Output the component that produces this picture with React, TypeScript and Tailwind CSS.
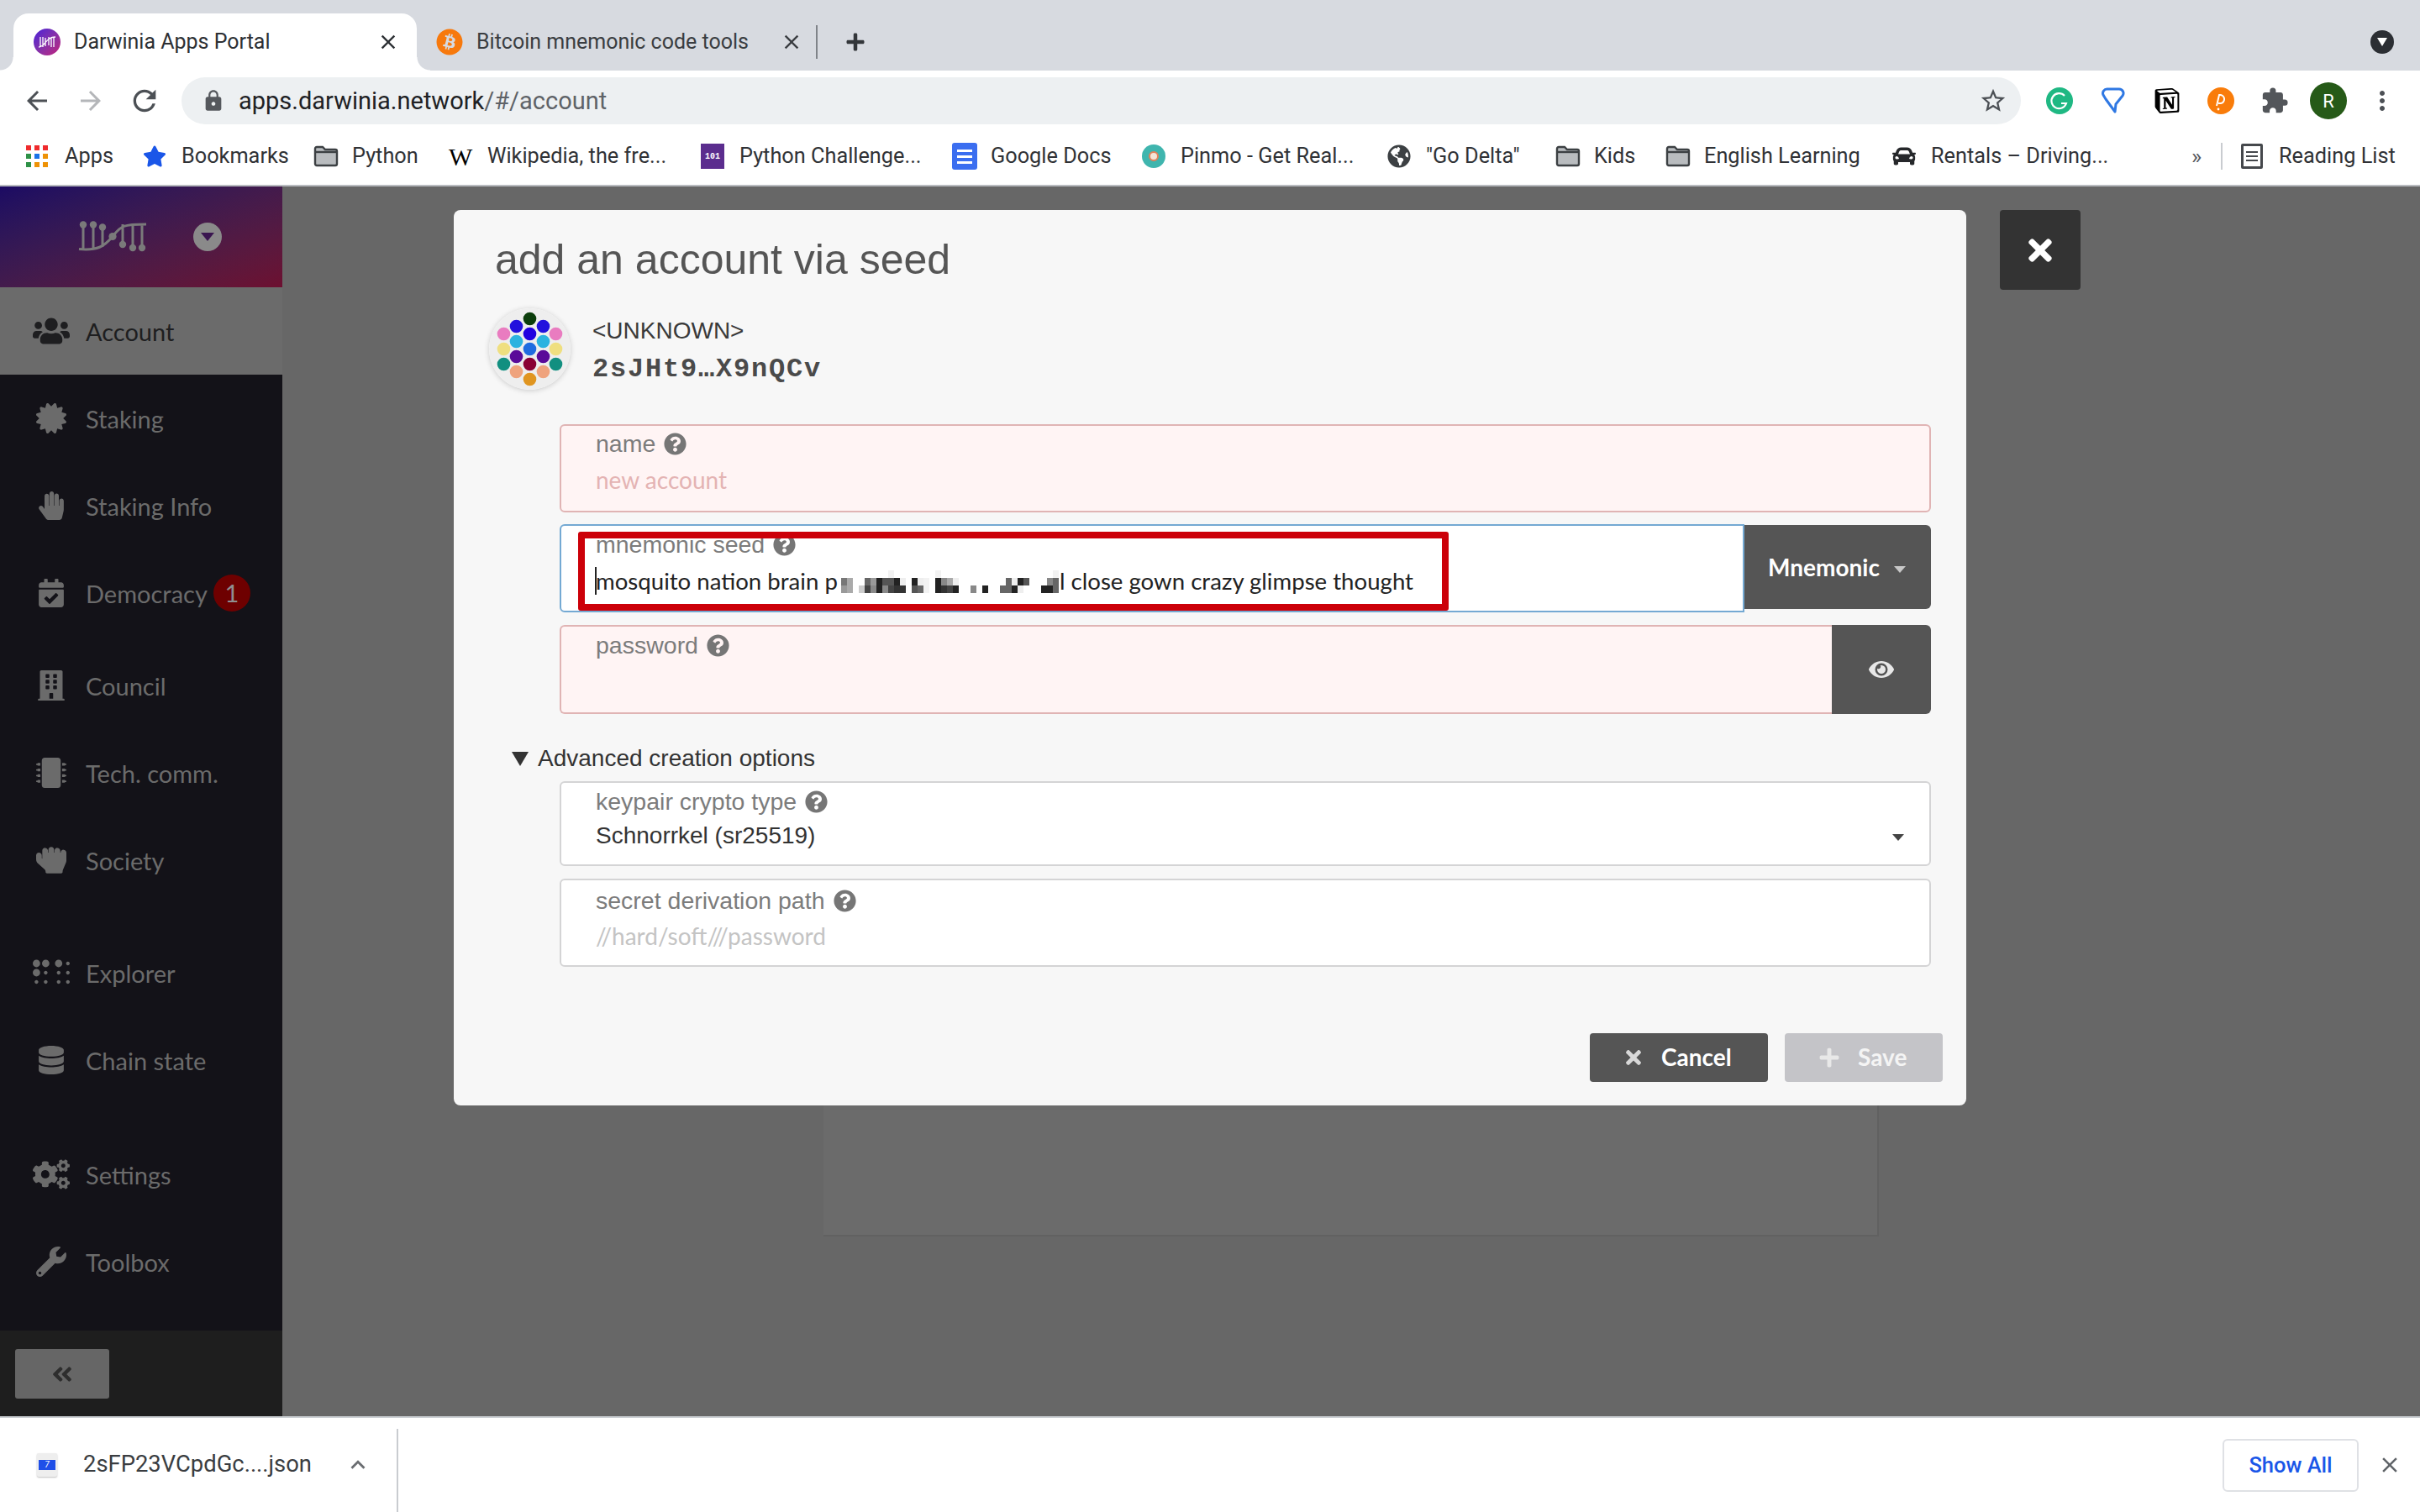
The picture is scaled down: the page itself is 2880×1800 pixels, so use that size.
import { ReactNode } from "react";
import {
  FaAngleDoubleLeft,
  FaBitcoin,
  FaBraille,
  FaBuilding,
  FaCalendarCheck,
  FaCar,
  FaCertificate,
  FaCogs,
  FaDatabase,
  FaEye,
  FaGlobeAmericas,
  FaHandPaper,
  FaHandRock,
  FaMicrochip,
  FaPlus,
  FaQuestionCircle,
  FaStar,
  FaTimes,
  FaUsers,
  FaWrench,
} from "react-icons/fa";
import {
  MdArrowBack,
  MdArrowForward,
  MdClose,
  MdExtension,
  MdKeyboardArrowUp,
  MdLock,
  MdMoreVert,
  MdOutlineStarBorder,
  MdRefresh,
} from "react-icons/md";
import { SiNotion } from "react-icons/si";

function Folder() {
  return (
    <svg width="30" height="26" viewBox="0 0 30 26">
      <path d="M2 4a2 2 0 0 1 2-2h7l3 3h12a2 2 0 0 1 2 2v15a2 2 0 0 1-2 2H4a2 2 0 0 1-2-2z" fill="#b9bcbf" stroke="#3c4043" strokeWidth="2.4" />
      <path d="M2 8h26" stroke="#3c4043" strokeWidth="2.4" />
    </svg>
  );
}

function AppsGrid() {
  const colors = ["#ef2b2d", "#ef2b2d", "#ef2b2d", "#2e9147", "#1a73e8", "#ee9206", "#2e9147", "#ee9206", "#ee9206"];
  return (
    <div className="grid grid-cols-3 gap-x-[4px] gap-y-[4px] w-[26px]">
      {colors.map((c, i) => (
        <svg key={i} width="6" height="6"><rect width="6" height="6" fill={c} /></svg>
      ))}
    </div>
  );
}

const bookmarks: { label: string; icon: ReactNode; width: string }[] = [
  { label: "Apps", icon: <AppsGrid />, width: "w-[139px]" },
  { label: "Bookmarks", icon: <FaStar size={28} color="#1a56e8" />, width: "w-[203px]" },
  { label: "Python", icon: <Folder />, width: "w-[161px]" },
  { label: "Wikipedia, the fre...", icon: <span className="font-['Liberation_Serif'] text-[30px] text-black">W</span>, width: "w-[300px]" },
  {
    label: "Python Challenge...",
    icon: (
      <div className="w-[28px] h-[30px] bg-[#5b2d8e] text-white text-[10px] font-bold flex items-center justify-center font-['Liberation_Mono',monospace]">101</div>
    ),
    width: "w-[299px]",
  },
  {
    label: "Google Docs",
    icon: (
      <div className="w-[30px] h-[32px] rounded-[3px] bg-[#3b6ef0] flex flex-col items-center justify-center gap-[4px]">
        <div className="w-[18px] h-[3px] bg-white" />
        <div className="w-[18px] h-[3px] bg-white" />
        <div className="w-[18px] h-[3px] bg-white" />
      </div>
    ),
    width: "w-[226px]",
  },
  {
    label: "Pinmo - Get Real...",
    icon: (
      <div className="w-[28px] h-[28px] rounded-full bg-[#3fb5ae] flex items-center justify-center">
        <div className="w-[12px] h-[12px] rounded-full bg-[#f3e6d8] border-2 border-[#e2825a]" />
      </div>
    ),
    width: "w-[292px]",
  },
  { label: '"Go Delta"', icon: <FaGlobeAmericas size={28} color="#3c4043" />, width: "w-[200px]" },
  { label: "Kids", icon: <Folder />, width: "w-[131px]" },
  { label: "English Learning", icon: <Folder />, width: "w-[270px]" },
  { label: "Rentals – Driving...", icon: <FaCar size={28} color="#26282b" />, width: "w-[356px]" },
];

const navGroups: { label: string; icon: ReactNode; active?: boolean; badge?: boolean }[][] = [
  [
    { label: "Account", icon: <FaUsers size={44} />, active: true },
    { label: "Staking", icon: <FaCertificate size={36} /> },
    { label: "Staking Info", icon: <FaHandPaper size={34} /> },
    { label: "Democracy", icon: <FaCalendarCheck size={34} />, badge: true },
    { label: "Council", icon: <FaBuilding size={36} /> },
    { label: "Tech. comm.", icon: <FaMicrochip size={36} /> },
    { label: "Society", icon: <FaHandRock size={36} /> },
  ],
  [
    { label: "Explorer", icon: <FaBraille size={44} /> },
    { label: "Chain state", icon: <FaDatabase size={34} /> },
  ],
  [
    { label: "Settings", icon: <FaCogs size={44} /> },
    { label: "Toolbox", icon: <FaWrench size={36} /> },
  ],
];

// pixelated part of the seed phrase: column, row, colour
const mosaic: [number, number, string][] = [
  [0, 1, "#777"], [0, 2, "#999"], [1, 1, "#aaa"], [1, 2, "#aaa"], [3, 2, "#ccc"],
  [4, 1, "#666"], [4, 2, "#444"], [5, 1, "#999"], [5, 2, "#888"], [6, 1, "#222"], [6, 2, "#222"],
  [7, 1, "#555"], [7, 2, "#888"], [8, 0, "#f2f2f2"], [8, 1, "#555"], [8, 2, "#444"],
  [9, 1, "#222"], [9, 2, "#333"], [10, 1, "#eee"], [10, 2, "#333"],
  [12, 1, "#222"], [12, 2, "#555"], [13, 1, "#eee"], [13, 2, "#666"], [14, 1, "#f2f2f2"], [14, 2, "#f2f2f2"],
  [16, 0, "#f2f2f2"], [16, 1, "#222"], [16, 2, "#222"], [17, 1, "#888"], [17, 2, "#333"],
  [18, 1, "#aaa"], [18, 2, "#444"], [19, 1, "#eee"], [19, 2, "#222"],
  [22, 2, "#888"], [24, 2, "#222"],
  [27, 2, "#666"], [28, 1, "#666"], [28, 2, "#666"], [29, 1, "#eee"], [29, 2, "#222"],
  [30, 1, "#222"], [30, 2, "#eee"], [31, 1, "#555"],
  [34, 2, "#222"], [35, 1, "#888"], [35, 2, "#222"], [36, 0, "#f2f2f2"], [36, 1, "#666"], [36, 2, "#666"],
];

const dots: [number, number, string][] = [
  [0, -36, "#0b3d0b"], [-16, -27, "#2211dd"], [16, -27, "#2211dd"], [-31, -18, "#e97cc0"], [0, -18, "#2200e0"], [31, -18, "#e97cc0"],
  [-16, -9, "#2bb3e0"], [16, -9, "#2bb3e0"], [-31, 0, "#efdf80"], [0, 0, "#1f6be0"], [31, 0, "#efdf80"],
  [-16, 9, "#5a0a99"], [16, 9, "#5a0a99"], [-31, 18, "#128f80"], [0, 18, "#8a0035"], [31, 18, "#128f80"],
  [-16, 27, "#efa37d"], [16, 27, "#efa37d"], [0, 36, "#e09520"],
];

function Label({ text }: { text: string }) {
  return (
    <div className="flex items-center gap-[10px] h-[32px] font-['Liberation_Sans',sans-serif] text-[28.5px] text-[#7c7c7c]">
      {text}
      <FaQuestionCircle size={27} color="#767676" />
    </div>
  );
}

function TabStrip() {
  return (
    <div className="h-[84px] bg-[#d7dae0] flex items-end shrink-0">
      <div className="relative ml-[16px] w-[480px] h-[68px] bg-white rounded-t-[18px] flex items-center pl-[24px] pr-[20px] before:content-[''] before:absolute before:left-[-16px] before:bottom-0 before:w-[16px] before:h-[16px] before:bg-[radial-gradient(circle_at_0_0,#d7dae0_15px,#ffffff_16px)] after:content-[''] after:absolute after:right-[-16px] after:bottom-0 after:w-[16px] after:h-[16px] after:bg-[radial-gradient(circle_at_100%_0,#d7dae0_15px,#ffffff_16px)]">
        <div className="w-[32px] h-[32px] rounded-full bg-gradient-to-br from-[#4a10d8] to-[#c2107a] flex items-center justify-center">
          <svg width="22" height="14" viewBox="0 0 22 14" fill="none" stroke="#fff" strokeWidth="1.3">
            <path d="M3 1v12M6 1v12M9 2v10M1 13c8 0 8-12 20-12M13 1v10M16 1v12M19 1v12" />
          </svg>
        </div>
        <span className="ml-[16px] text-[25px] text-[#2d3034] font-['Roboto',sans-serif] flex-1">Darwinia Apps Portal</span>
        <MdClose size={28} color="#2d3034" />
      </div>
      <div className="h-[68px] flex items-center pl-[23px]">
        <FaBitcoin size={32} color="#f7790d" />
        <span className="ml-[16px] w-[361px] text-[25px] text-[#3a3d41] font-['Roboto',sans-serif]">Bitcoin mnemonic code tools</span>
        <MdClose size={28} color="#3a3d41" />
        <div className="ml-[15px] w-[2px] h-[40px] bg-[#7f8389]" />
        <FaPlus size={24} color="#33363a" className="ml-[33px]" />
      </div>
      <div className="ml-auto mr-[31px] mb-[20px] w-[28px] h-[28px] rounded-full bg-[#2b2e33] flex items-center justify-center">
        <svg width="12" height="10" viewBox="0 0 12 10"><path d="M0 0h12L6 10z" fill="#fff" /></svg>
      </div>
    </div>
  );
}

function Toolbar() {
  return (
    <div className="h-[64px] bg-white flex items-center pl-[11px] pt-[8px] shrink-0">
      <div className="w-[65px] flex justify-center"><MdArrowBack size={36} color="#4c5055" /></div>
      <div className="w-[64px] flex justify-center"><MdArrowForward size={36} color="#b4b6b9" /></div>
      <div className="w-[64px] flex justify-center"><MdRefresh size={40} color="#4c5055" /></div>
      <div className="ml-[12px] w-[2189px] h-[56px] rounded-full bg-[#edf0f2] flex items-center pl-[24px] pr-[16px]">
        <MdLock size={28} color="#55585d" />
        <span className="ml-[16px] pt-[2px] text-[29px] font-['Roboto',sans-serif] text-[#202124]">
          apps.darwinia.network<span className="text-[#5f6368]">/#/account</span>
        </span>
        <MdOutlineStarBorder size={34} color="#4c5055" className="ml-auto" />
      </div>
      <div className="ml-[14px] flex items-center">
        <div className="w-[64px] flex justify-center">
          <svg width="32" height="32" viewBox="0 0 32 32">
            <circle cx="16" cy="16" r="16" fill="#1fb883" />
            <path d="M22 10a9 9 0 1 0 2 9h-6m6 0v-1" fill="none" stroke="#fff" strokeWidth="2.2" />
          </svg>
        </div>
        <div className="w-[64px] flex justify-center">
          <svg width="28" height="32" viewBox="0 0 28 32">
            <path d="M7 2h14a5 5 0 0 1 4 8l-8 10-1 9-11-15-3-5a5 5 0 0 1 5-7z" fill="none" stroke="#2f78e3" strokeWidth="3" strokeLinejoin="round" />
          </svg>
        </div>
        <div className="w-[64px] flex justify-center"><SiNotion size={30} color="#000" /></div>
        <div className="w-[64px] flex justify-center">
          <div className="w-[32px] h-[32px] rounded-full bg-[#f97c0a] flex items-center justify-center">
            <svg width="16" height="24" viewBox="0 0 16 24">
              <path d="M3 18 6 5a5 5 0 1 1 2 10H5" fill="none" stroke="#fff" strokeWidth="2" />
              <circle cx="5" cy="22" r="1.4" fill="#fff" />
            </svg>
          </div>
        </div>
        <div className="w-[64px] flex justify-center"><MdExtension size={34} color="#53565a" /></div>
        <div className="w-[64px] flex justify-center">
          <div className="w-[44px] h-[44px] rounded-full bg-[#265a18] text-white text-[22px] flex items-center justify-center font-['Roboto',sans-serif]">R</div>
        </div>
        <div className="w-[64px] flex justify-center"><MdMoreVert size={36} color="#4c5055" /></div>
      </div>
    </div>
  );
}

function BookmarksBar() {
  return (
    <div className="h-[74px] bg-white border-b-2 border-[#b9bcc0] flex items-center pl-[31px] pt-[4px] shrink-0 font-['Roboto',sans-serif] text-[25.3px] text-[#303236]">
      {bookmarks.map((b) => (
        <div key={b.label} className={`flex items-center ${b.width}`}>
          <div className="w-[46px] flex items-center">{b.icon}</div>
          <span className="whitespace-nowrap">{b.label}</span>
        </div>
      ))}
      <span className="text-[26px] text-[#55585d] w-[35px]">»</span>
      <div className="w-[2px] h-[32px] bg-[#c9ccd0]" />
      <div className="ml-[22px] w-[45px] flex">
        <div className="w-[26px] h-[30px] border-[3px] border-[#45484c] rounded-[2px] flex flex-col justify-center gap-[3px] px-[3px]">
          <div className="h-[2px] bg-[#45484c]" />
          <div className="h-[2px] bg-[#45484c]" />
          <div className="h-[2px] bg-[#45484c]" />
        </div>
      </div>
      <span className="whitespace-nowrap">Reading List</span>
    </div>
  );
}

function NavRow({ label, icon, active, badge }: { label: string; icon: ReactNode; active?: boolean; badge?: boolean }) {
  return (
    <div className={`h-[104px] flex items-center font-['Lato',sans-serif] text-[29px] ${active ? "bg-[#6b6b6b] text-[#1e1e20]" : "text-[#6b6b6b]"} ${badge ? "mb-[6px]" : ""}`}>
      <div className="w-[102px] pl-[20px] flex justify-center">{icon}</div>
      <span className="pt-[2px]">{label}</span>
      {badge && (
        <div className="ml-[7px] w-[44px] h-[44px] rounded-full bg-[#6e0000] text-[#8f8f8f] flex items-center justify-center">1</div>
      )}
    </div>
  );
}

function Sidebar() {
  return (
    <div className="w-[336px] shrink-0 bg-[#131218] flex flex-col">
      <div className="h-[120px] bg-gradient-to-br from-[#1c0a63] to-[#6d0f30] flex items-center pl-[80px]">
        <svg width="110" height="55" viewBox="0 0 110 55" fill="none" stroke="#7a7a7a" strokeWidth="3">
          <path d="M19 12v29M31 12v29M42 15v24M14 41.5c22 2 30-3 40-15S64 12 94 12M66 12v24M78 12v28M89 12v28" />
          <g fill="#7a7a7a" stroke="none">
            <circle cx="19" cy="12.5" r="4.2" /><circle cx="31" cy="12.5" r="4.2" /><circle cx="42" cy="15.5" r="4.2" />
            <circle cx="54" cy="26.5" r="4.6" /><circle cx="66" cy="36" r="4.2" /><circle cx="78" cy="40" r="4.2" /><circle cx="89" cy="40" r="4.2" />
          </g>
        </svg>
        <div className="ml-[40px] w-[34px] h-[34px] rounded-full bg-[#8a8a8a] flex items-center justify-center">
          <svg width="16" height="10" viewBox="0 0 16 10"><path d="M0 0h16L8 10z" fill="#3a1650" /></svg>
        </div>
      </div>
      <div className="flex flex-col gap-[30px]">
        {navGroups.map((group, i) => (
          <div key={i} className={`flex flex-col ${i === 1 ? "mb-[2px]" : ""}`}>
            {group.map((item) => (
              <NavRow key={item.label} {...item} />
            ))}
          </div>
        ))}
      </div>
      <div className="mt-auto h-[102px] bg-[#1e1e1e] pl-[18px] pt-[22px]">
        <div className="w-[112px] h-[59px] rounded-[3px] bg-[#666666] flex items-center justify-center">
          <FaAngleDoubleLeft size={28} color="#2e2e2e" />
        </div>
      </div>
    </div>
  );
}

function Avatar() {
  return (
    <svg width="97" height="97" viewBox="-48.5 -48.5 97 97" className="shrink-0 rounded-full shadow-[0_1px_6px_rgba(0,0,0,0.18)]">
      <circle r="48.5" fill="#eeeeee" />
      {dots.map(([x, y, c], i) => (
        <circle key={i} cx={x} cy={y} r="7.8" fill={c} />
      ))}
    </svg>
  );
}

function Modal() {
  return (
    <div className="absolute left-[204px] top-[28px] w-[1800px] h-[1066px] rounded-[8px] bg-[#f7f7f7] flex flex-col">
      <h1 className="mt-[30px] ml-[49px] h-[58px] leading-[58px] font-['Liberation_Sans',sans-serif] text-[50px] text-[#555555]">add an account via seed</h1>
      <div className="mt-[29px] ml-[42px] flex items-center">
        <Avatar />
        <div className="ml-[26px] pt-[3px] flex flex-col">
          <span className="h-[46px] leading-[46px] font-['Liberation_Sans',sans-serif] text-[28px] text-[#3a3a3a]">&lt;UNKNOWN&gt;</span>
          <span className="h-[46px] leading-[46px] font-['Liberation_Mono',monospace] font-bold text-[32px] tracking-[1.8px] text-[#4a4a4a]">2sJHt9…X9nQCv</span>
        </div>
      </div>

      <div className="mt-[41px] ml-[126px] w-[1632px] flex flex-col">
        <div className="h-[105px] rounded-[6px] border-2 border-[#e0b4b4] bg-[#fff4f4] pl-[41px] pt-[5px]">
          <Label text="name" />
          <div className="mt-[11px] h-[32px] leading-[32px] font-['Lato',sans-serif] text-[28px] text-[#e4b3b3]">new account</div>
        </div>

        <div className="mt-[14px] flex items-start">
          <div className="relative w-[1410px] h-[105px] rounded-l-[6px] border-2 border-[#74a9d3] bg-white pl-[41px] pt-[6px]">
            <Label text="mnemonic seed" />
            <div className="mt-[12px] h-[32px] flex items-center font-['Lato',sans-serif] text-[27.6px] text-[#222222] whitespace-nowrap">
              <span className="w-[292px]">mosquito nation brain p</span>
              <svg width="259" height="27" className="shrink-0">
                {mosaic.map(([col, row, c], i) => (
                  <rect key={i} x={col * 7} y={row * 9} width="7" height="9" fill={c} />
                ))}
              </svg>
              <span className="ml-[1px]">l close gown crazy glimpse thought</span>
            </div>
            <div className="absolute left-[40px] top-[49px] w-[2px] h-[33px] bg-[#222222]" />
            <div className="absolute left-[20px] top-[7px] w-[1036px] h-[94px] rounded-[3px] border-[8px] border-[#cc0009]" />
          </div>
          <div className="mt-[1px] w-[222px] h-[100px] rounded-r-[6px] bg-[#555555] flex items-center pl-[28px] font-['Lato',sans-serif] font-bold text-[28px] text-white">
            Mnemonic
            <svg width="14" height="8" viewBox="0 0 14 8" className="ml-[17px] mt-[6px]"><path d="M0 0h14L7 8z" fill="#c8c8c8" /></svg>
          </div>
        </div>

        <div className="mt-[15px] flex">
          <div className="w-[1514px] h-[106px] rounded-l-[6px] border-2 border-r-0 border-[#e0b4b4] bg-[#fff4f4] pl-[41px] pt-[6px]">
            <Label text="password" />
          </div>
          <div className="w-[118px] h-[106px] rounded-r-[6px] bg-[#555555] flex items-center justify-center">
            <FaEye size={30} color="#e8e8e8" />
          </div>
        </div>

        <div className="ml-[-57px] mt-[37px] h-[32px] flex items-center font-['Liberation_Sans',sans-serif] text-[28px] text-[#333333]">
          <svg width="20" height="17" viewBox="0 0 20 17" className="mr-[11px]"><path d="M0 0h20L10 17z" fill="#333333" /></svg>
          Advanced creation options
        </div>

        <div className="mt-[11px] h-[101px] rounded-[6px] border-2 border-[#d4d4d5] bg-white pl-[41px] pt-[6px]">
          <Label text="keypair crypto type" />
          <div className="mt-[9px] h-[32px] pr-[30px] flex items-center justify-between font-['Liberation_Sans',sans-serif] text-[28px] text-[#333333]">
            Schnorrkel (sr25519)
            <svg width="14" height="8" viewBox="0 0 14 8" className="mt-[4px]"><path d="M0 0h14L7 8z" fill="#444444" /></svg>
          </div>
        </div>

        <div className="mt-[15px] h-[105px] rounded-[6px] border-2 border-[#d4d4d5] bg-white pl-[41px] pt-[8px]">
          <Label text="secret derivation path" />
          <div className="mt-[10px] h-[32px] leading-[32px] font-['Lato',sans-serif] text-[28px] text-[#c4c4c4]">//hard/soft///password</div>
        </div>
      </div>

      <div className="mt-[79px] mr-[28px] flex justify-end gap-[20px] font-['Lato',sans-serif] font-bold text-[28px]">
        <div className="w-[212px] h-[58px] rounded-[4px] bg-[#555555] text-white flex items-center pl-[39px]">
          <FaTimes size={26} color="#d8d8d8" />
          <span className="ml-[20px] pb-[2px]">Cancel</span>
        </div>
        <div className="w-[188px] h-[58px] rounded-[4px] bg-[#c4c4c8] text-[#f4f4f4] flex items-center pl-[40px]">
          <FaPlus size={26} color="#e8e8e8" />
          <span className="ml-[21px] pb-[2px]">Save</span>
        </div>
      </div>
    </div>
  );
}

function DownloadBar() {
  return (
    <div className="h-[114px] bg-white border-t-2 border-[#ccd0d4] flex items-center shrink-0 font-['Roboto',sans-serif]">
      <div className="ml-[44px] w-[24px] h-[28px] bg-[#eeeeee] rounded-[2px] shadow-[0_1px_2px_rgba(0,0,0,0.25)] flex items-center justify-center">
        <div className="w-[20px] h-[12px] bg-[#1f4fe8] text-white text-[10px] italic leading-[12px] text-center">7</div>
      </div>
      <span className="ml-[31px] w-[310px] text-[27.4px] text-[#3a3d41]">2sFP23VCpdGc....json</span>
      <MdKeyboardArrowUp size={34} color="#6a6d71" />
      <div className="ml-[29px] w-[2px] h-[100px] mt-[14px] bg-[#c9ccd0]" />
      <div className="ml-auto w-[162px] h-[63px] rounded-[6px] border-2 border-[#dfe1e5] flex items-center justify-center text-[25.5px] font-medium text-[#1a56e8]">Show All</div>
      <MdClose size={30} color="#5f6368" className="ml-[22px] mr-[21px]" />
    </div>
  );
}

export default function App() {
  return (
    <div className="w-[2880px] h-[1800px] flex flex-col overflow-hidden">
      <TabStrip />
      <Toolbar />
      <BookmarksBar />
      <div className="flex-1 flex min-h-0">
        <Sidebar />
        <div className="relative flex-1 bg-[#676767]">
          <div className="ml-[644px] mt-[100px] w-[1256px] h-[1150px] bg-[#6b6b6b] border-r-2 border-b-2 border-[#616161]" />
          <Modal />
          <div className="absolute left-[2044px] top-[28px] w-[96px] h-[95px] rounded-[4px] bg-[#333333] flex items-center justify-center">
            <FaTimes size={40} color="#ffffff" />
          </div>
        </div>
      </div>
      <DownloadBar />
    </div>
  );
}
